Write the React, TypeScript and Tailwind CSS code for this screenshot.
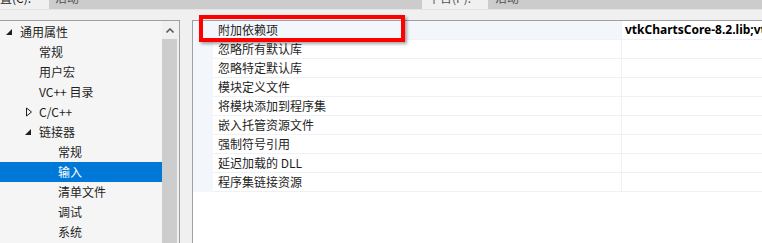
import React from "react";

const cjk = "font-['Microsoft_YaHei_UI','Noto_Sans_CJK_SC','Noto_Sans',sans-serif]";

function Expanded({ x }: { x: number }) {
  return (
    <svg width="8" height="8" viewBox="0 0 8 8" className="shrink-0" style={{ marginLeft: x }}>
      <polygon points="7,1 7,7 1,7" fill="#1e1e1e" />
    </svg>
  );
}

function Collapsed({ x }: { x: number }) {
  return (
    <svg width="8" height="10" viewBox="0 0 8 10" className="shrink-0" style={{ marginLeft: x }}>
      <polygon points="1.5,1 6.5,5 1.5,9" fill="none" stroke="#1e1e1e" strokeWidth="1" />
    </svg>
  );
}

type TreeItem = { label: string; level: number; icon?: "exp" | "col"; selected?: boolean };

const tree: TreeItem[] = [
  { label: "通用属性", level: 0, icon: "exp" },
  { label: "常规", level: 1 },
  { label: "用户宏", level: 1 },
  { label: "VC++ 目录", level: 1 },
  { label: "C/C++", level: 1, icon: "col" },
  { label: "链接器", level: 1, icon: "exp" },
  { label: "常规", level: 2 },
  { label: "输入", level: 2, selected: true },
  { label: "清单文件", level: 2 },
  { label: "调试", level: 2 },
  { label: "系统", level: 2 },
];

const props = [
  "附加依赖项",
  "忽略所有默认库",
  "忽略特定默认库",
  "模块定义文件",
  "将模块添加到程序集",
  "嵌入托管资源文件",
  "强制符号引用",
  "延迟加载的 DLL",
  "程序集链接资源",
];

export default function App() {
  return (
    <div className={`relative w-[762px] h-[243px] overflow-hidden bg-[#f0f0f0] text-[12px] text-[#1e1e1e] ${cjk}`}>
      {/* top strip (cut off) */}
      <div className="flex h-[10px] overflow-hidden border-b border-[#e4e4e4]">
        <div className="w-[49px] shrink-0 overflow-hidden">
          <div className="h-[22px] mt-[-13px] ml-[-12px] flex items-center whitespace-nowrap">配置(C):</div>
        </div>
        <div className="w-[373px] shrink-0 bg-[#cccccc] overflow-hidden">
          <div className="h-[22px] mt-[-13px] pl-[6px] flex items-center whitespace-nowrap text-[#555]">活动</div>
        </div>
        <div className="w-[66px] shrink-0 overflow-hidden">
          <div className="h-[22px] mt-[-13px] pl-[6px] flex items-center whitespace-nowrap text-[#555]">平台(P):</div>
        </div>
        <div className="flex-1 bg-[#cccccc] overflow-hidden">
          <div className="h-[22px] mt-[-13px] pl-[7px] flex items-center whitespace-nowrap text-[#555]">活动</div>
        </div>
      </div>
      <div className="h-[10px]" />

      <div className="flex h-[223px]">
        {/* left tree panel */}
        <div className="w-[180px] shrink-0 flex border-t border-r border-[#a0a0a0] bg-[#f5f5f5]">
          <div className="w-[162px] shrink-0 pt-[1px]">
            {tree.map((t, i) => {
              const textLeft = 20 + t.level * 19;
              return (
                <div
                  key={i}
                  className={`relative h-[20px] flex items-center whitespace-nowrap ${t.selected ? "bg-[#0078d7] text-white" : ""}`}
                >
                  {t.icon && (
                    <div className="absolute top-0 h-[20px] flex items-center" style={{ left: textLeft - 15 }}>
                      {t.icon === "exp" ? <Expanded x={0} /> : <Collapsed x={1} />}
                    </div>
                  )}
                  <span style={{ marginLeft: textLeft }}>{t.label}</span>
                </div>
              );
            })}
          </div>
          <div className="w-[17px] shrink-0 bg-[#f0f0f0] flex flex-col">
            <div className="h-[18px] flex items-center justify-center pr-[2px]">
              <svg width="8" height="5" viewBox="0 0 8 5">
                <polyline points="0.5,4.5 4,1 7.5,4.5" fill="none" stroke="#606060" strokeWidth="1.6" />
              </svg>
            </div>
            <div className="flex-1 w-[15px] bg-[#cdcdcd]" />
          </div>
        </div>

        <div className="w-[12px] shrink-0" />

        {/* right property panel */}
        <div className="flex-1 border-t border-l border-[#a0a0a0] bg-white overflow-hidden">
          {props.map((p, i) => (
            <div key={i} className="flex h-[19px]">
              <div className="w-[20px] shrink-0 bg-[#f3f6fb]" />
              <div
                className={`w-[408px] shrink-0 flex items-center pl-[5px] border-b border-[#eef2f7] whitespace-nowrap ${i === 0 ? "bg-[#f3f6fb]" : ""}`}
              >
                {p}
              </div>
              <div className="flex-1 border-l border-b border-[#eef2f7] flex items-center pl-[3px] whitespace-nowrap overflow-hidden">
                {i === 0 && (
                  <span className="font-['Noto_Sans',sans-serif] font-bold text-black">
                    vtkChartsCore-8.2.lib;vtkChartsCore
                  </span>
                )}
              </div>
            </div>
          ))}
        </div>
      </div>

      {/* red annotation box */}
      <div className="absolute left-[199px] top-[15px] w-[206px] h-[27px] border-4 border-[#ff0000] shadow-[2px_2px_3px_rgba(0,0,0,0.35)]" />
    </div>
  );
}
